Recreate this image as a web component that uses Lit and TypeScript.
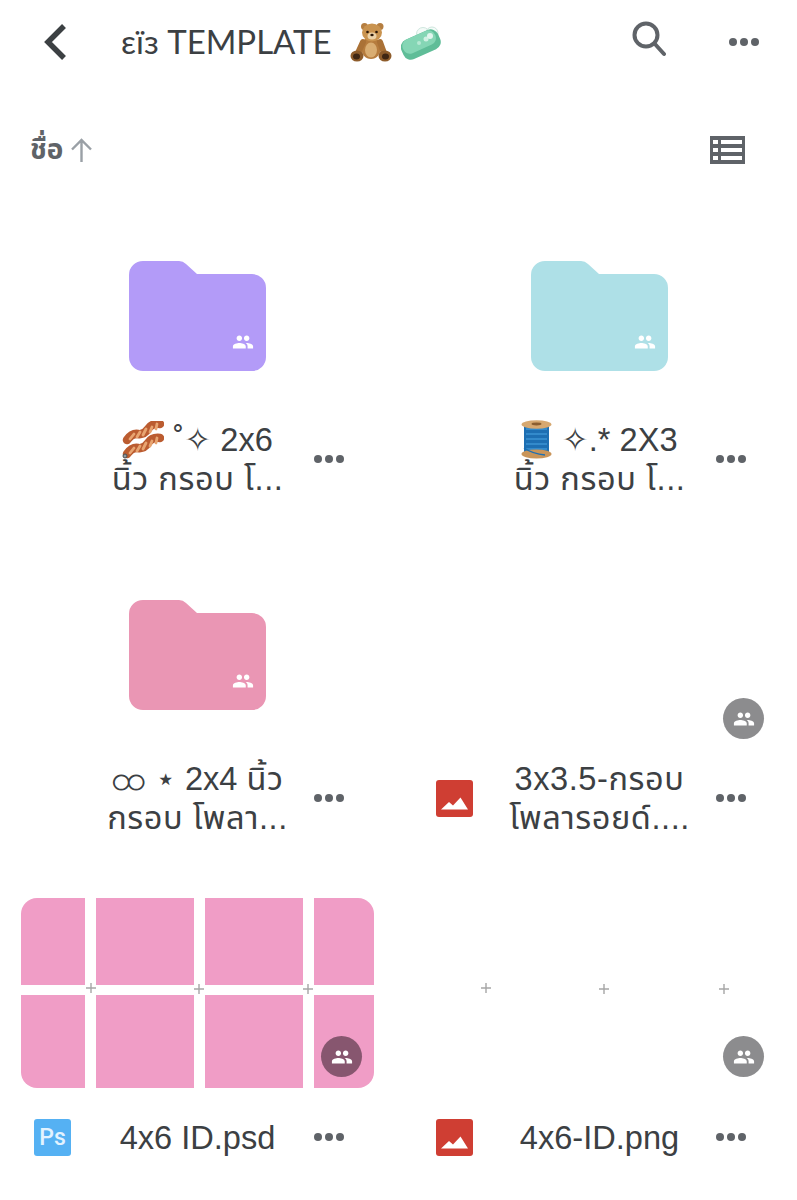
import { LitElement, html, css, svg } from "lit";
import { customElement } from "lit/decorators.js";

const PEOPLE = "M16 11c1.66 0 2.99-1.34 2.99-3S17.66 5 16 5c-1.66 0-3 1.34-3 3s1.34 3 3 3zm-8 0c1.66 0 2.99-1.34 2.99-3S9.66 5 8 5C6.34 5 5 6.34 5 8s1.34 3 3 3zm0 2c-2.33 0-7 1.17-7 3.5V19h14v-2.5c0-2.33-4.67-3.5-7-3.5zm8 0c-.29 0-.62.02-.97.05 1.16.84 1.97 1.97 1.97 3.45V19h6v-2.5c0-2.33-4.67-3.5-7-3.5z";

const dots = (cls = "dots") => html`<svg class=${cls} width="30" height="8" viewBox="0 0 30 8"><circle cx="4" cy="4" r="4"/><circle cx="15" cy="4" r="4"/><circle cx="26" cy="4" r="4"/></svg>`;

const people = (cls: string) => html`<svg class=${cls} viewBox="0 0 24 24"><path d=${PEOPLE}/></svg>`;

const badge = (dark = false) => html`<div class="badge ${dark ? "dark" : ""}">${people("badge-icon")}</div>`;

const folder = (color: string) => html`
  <div class="folder">
    <svg width="137" height="110" viewBox="0 0 137 110">
      <path fill=${color} d="M14 0H50Q54 0 57 3L68 13H123A14 14 0 0 1 137 27V96A14 14 0 0 1 123 110H14A14 14 0 0 1 0 96V14A14 14 0 0 1 14 0Z"/>
    </svg>
    ${people("folder-people")}
  </div>`;

const imageIcon = () => html`<svg class="ficon" width="37" height="37" viewBox="0 0 37 37">
  <rect width="37" height="37" rx="3" fill="#cf3e33"/>
  <path fill="#fff" d="M5 29.5L13 22L17 25.5L24.5 17.5L32 29.5Z"/>
</svg>`;

const psIcon = () => html`<div class="ps">Ps</div>`;

const bear = () => html`<svg class="emoji" width="42" height="39" viewBox="0 0 42 39">
  <ellipse cx="21" cy="25" rx="10" ry="11" fill="#b67c3e"/>
  <ellipse cx="21" cy="27" rx="6" ry="7.5" fill="#d9ad72"/>
  <path d="M13 19L8 30" stroke="#aa7136" stroke-width="6" stroke-linecap="round"/>
  <path d="M30 19L34 30" stroke="#aa7136" stroke-width="6" stroke-linecap="round"/>
  <ellipse cx="7" cy="33" rx="6.5" ry="5.5" fill="#8e5c2b"/>
  <ellipse cx="35" cy="33" rx="6.5" ry="5.5" fill="#8e5c2b"/>
  <ellipse cx="6.5" cy="33.5" rx="3.5" ry="3" fill="#3f2613"/>
  <ellipse cx="35.5" cy="33.5" rx="3.5" ry="3" fill="#3f2613"/>
  <circle cx="14.5" cy="3.5" r="3.5" fill="#b57e40"/>
  <circle cx="30" cy="3.5" r="3.5" fill="#b57e40"/>
  <ellipse cx="22" cy="9.5" rx="10" ry="9" fill="#c9934f"/>
  <ellipse cx="22" cy="13" rx="4.5" ry="3.6" fill="#ecd2a8"/>
  <circle cx="17.5" cy="9" r="1.3" fill="#2a1708"/>
  <circle cx="26.5" cy="9" r="1.3" fill="#2a1708"/>
  <ellipse cx="22" cy="12" rx="1.7" ry="1.2" fill="#2a1708"/>
</svg>`;

const soap = () => html`<svg class="emoji" width="42" height="35" viewBox="0 0 42 35">
  <circle cx="22" cy="9" r="6.5" fill="#f4fbf8" stroke="#cfe6de"/>
  <circle cx="31" cy="8" r="6" fill="#f4fbf8" stroke="#cfe6de"/>
  <g transform="rotate(-24 20 20)">
    <rect x="0" y="9" width="40" height="21" rx="8" fill="#5fbd98"/>
    <rect x="2" y="9" width="35" height="15" rx="7" fill="#85d6b5"/>
  </g>
  <circle cx="25" cy="14" r="2.5" fill="#d0f0e3"/>
  <circle cx="29" cy="11" r="3" fill="#e2f6ee"/>
  <circle cx="18" cy="18" r="2" fill="#b6e8d3"/>
</svg>`;

const bacon = () => html`<svg class="emoji bacon" width="42" height="38" viewBox="0 0 42 38">
  ${[0, 14].map((dy) => svg`<g transform="translate(0 ${dy})" fill="none" stroke-linecap="round">
    <path d="M5 19Q10 12 16 13T26 8T38 3" stroke="#bb5c30" stroke-width="8.5"/>
    <path d="M8 18L12 13M15 16L18 11M21 14L24 8M28 11L30 6M34 8L35 3" stroke="#e8a571" stroke-width="2.8"/>
  </g>`)}
  <circle cx="3" cy="35" r="2" fill="#8f9aa0" stroke="#4a4f52"/>
</svg>`;

const spool = () => html`<svg class="emoji spool" width="31" height="39" viewBox="0 0 31 39">
  <rect x="3" y="5" width="25" height="29" fill="#1d6fb3"/>
  <path d="M5 9H26M5 14H26M5 19H26M5 24H26M5 29H26" stroke="#3b94d3" stroke-width="1.4"/>
  <ellipse cx="15.5" cy="4.5" rx="15" ry="4.2" fill="#d6a870"/>
  <ellipse cx="15.5" cy="4" rx="5" ry="1.4" fill="#8b5e30"/>
  <ellipse cx="15.5" cy="34" rx="15" ry="4.6" fill="#c9955a"/>
  <path d="M3 28Q12 34 24 35" stroke="#1d6fb3" stroke-width="1.5" fill="none"/>
</svg>`;

const plus = (x: number, y: number) => svg`<path d="M${x - 5} ${y}H${x + 5}M${x} ${y - 5}V${y + 5}" stroke="#a6a6a6" stroke-width="1.4"/>`;

@customElement("app-root")
export class AppRoot extends LitElement {
  static styles = css`
    :host {
      display: block;
      width: 797px;
      height: 1200px;
      overflow: hidden;
      background: #fff;
      font-family: "Liberation Sans", "Noto Sans Thai", "Noto Sans", "DejaVu Sans", sans-serif;
      color: #3c4043;
    }
    .header {
      display: flex;
      align-items: center;
      height: 84px;
      padding: 0 38px 0 43px;
    }
    .title {
      margin-left: 54px;
      margin-top: -3px;
      font-family: Lato, "Noto Sans", sans-serif;
      font-size: 33px;
      line-height: 40px;
      color: #3c4043;
      white-space: nowrap;
      display: flex;
      align-items: center;
    }
    .title .emoji { margin-left: 18px; margin-top: 3px; }
    .title .emoji + .emoji { margin-left: 9px; }
    .search { margin-left: auto; margin-top: -6px; margin-right: 3px; }
    .header .dots { margin-left: 60px; }
    .sort {
      display: flex;
      align-items: center;
      height: 132px;
      padding: 0 52px 0 30px;
    }
    .sort-label {
      font-size: 28px;
      line-height: 36px;
      font-weight: 700;
      color: #5f6368;
    }
    .sort-arrow { margin-left: 7px; }
    .list-icon { margin-left: auto; }
    .grid {
      display: grid;
      grid-template-columns: 353px 353px;
      grid-auto-rows: 339px;
      column-gap: 49px;
      padding: 5px 21px 0;
    }
    .card { display: flex; flex-direction: column; }
    .thumb {
      position: relative;
      height: 190px;
      flex: none;
      display: flex;
      align-items: center;
      justify-content: center;
    }
    .thumb.up { margin-top: -1px; margin-bottom: 1px; }
    .folder { position: relative; width: 137px; height: 110px; }
    .folder svg:first-child { display: block; }
    .folder-people {
      position: absolute;
      right: 12px;
      bottom: 18px;
      width: 22px;
      height: 22px;
      fill: #fff;
    }
    .badge {
      position: absolute;
      right: 12px;
      bottom: 11px;
      width: 41px;
      height: 41px;
      border-radius: 50%;
      background: #8c8c8e;
      display: flex;
      align-items: center;
      justify-content: center;
    }
    .badge.dark { background: #87566f; }
    .badge-icon { width: 22px; height: 22px; fill: #fff; }
    .cells {
      width: 100%;
      height: 100%;
      display: grid;
      grid-template-columns: 64px 98px 98px 60px;
      grid-template-rows: 87px 93px;
      gap: 10px 11px;
      border-radius: 16px;
      overflow: hidden;
    }
    .cells div { background: #f09dc6; }
    .crosses { position: absolute; inset: 0; width: 100%; height: 100%; }
    .label {
      height: 96px;
      display: grid;
      grid-template-columns: 1fr 226px 1fr;
      align-items: center;
      padding: 0 13px;
    }
    .ficon, .ps { justify-self: start; }
    .ps {
      grid-column: 1;
      width: 37px;
      height: 37px;
      border-radius: 3px;
      background: #55b1f3;
      color: #e3f3ff;
      font-family: Roboto, sans-serif;
      font-size: 23px;
      line-height: 37px;
      text-align: center;
      font-weight: 500;
    }
    .name {
      grid-column: 2;
      font-size: 32.6px;
      line-height: 39px;
      text-align: center;
      white-space: nowrap;
      color: #3c4043;
      margin: 0 -20px;
    }
    .name .emoji { vertical-align: -4px; margin: -14px 0 -4px; }
    .th { letter-spacing: 0.55px; }
    .loop { font-size: 36px; line-height: 0; }
    .dots { fill: #5f6368; display: block; flex: none; }
    .label .dots { grid-column: 3; justify-self: end; margin-right: 17px; }
  `;

  private label(icon: unknown, name: unknown) {
    return html`<div class="label">${icon ?? html`<span></span>`}<div class="name">${name}</div>${dots()}</div>`;
  }

  render() {
    return html`
      <header class="header">
        <svg width="24" height="38" viewBox="0 0 24 38"><path d="M21 3L5 19L21 35" fill="none" stroke="#3c4043" stroke-width="5.5"/></svg>
        <div class="title">εïз TEMPLATE ${bear()}${soap()}</div>
        <svg class="search" width="34" height="36" viewBox="0 0 34 36" fill="none" stroke="#5f6368" stroke-width="4">
          <circle cx="14" cy="14" r="11.5"/><path d="M22.5 22.5L32 33" stroke-linecap="round"/>
        </svg>
        ${dots()}
      </header>
      <div class="sort">
        <span class="sort-label">ชื่อ</span>
        <svg class="sort-arrow" width="23" height="24" viewBox="0 0 23 24" fill="none" stroke="#9aa0a6" stroke-width="2.4"><path d="M11.5 24V2M2 11.5L11.5 2L21 11.5"/></svg>
        <svg class="list-icon" width="35" height="28" viewBox="0 0 35 28">
          <rect width="35" height="28" fill="#5f6368"/>
          <path fill="#fff" d="M3 4h5v4H3zM11 4h21v4H11zM3 12h5v4H3zM11 12h21v4H11zM3 20h5v4H3zM11 20h21v4H11z"/>
        </svg>
      </div>
      <main class="grid">
        <section class="card">
          <div class="thumb">${folder("#b39bf8")}</div>
          ${this.label(null, html`${bacon()} ˚✧ 2x6<br /><span class="th">นิ้ว กรอบ โ...</span>`)}
        </section>
        <section class="card">
          <div class="thumb">${folder("#aee0e7")}</div>
          ${this.label(null, html`${spool()} ✧.* 2X3<br /><span class="th">นิ้ว กรอบ โ...</span>`)}
        </section>
        <section class="card">
          <div class="thumb">${folder("#ea96b4")}</div>
          ${this.label(null, html`<span class="loop">ထ</span> ⋆ 2x4 <span class="th">นิ้ว</span><br /><span class="th">กรอบ โพลา...</span>`)}
        </section>
        <section class="card">
          <div class="thumb">${badge()}</div>
          ${this.label(imageIcon(), html`<span class="th">3x3.5-กรอบ</span><br /><span class="th">โพลารอยด์....</span>`)}
        </section>
        <section class="card">
          <div class="thumb up">
            <div class="cells">
              <div></div><div></div><div></div><div></div>
              <div></div><div></div><div></div><div></div>
            </div>
            <svg class="crosses" viewBox="0 0 353 190">${plus(70, 90)}${plus(178, 91)}${plus(287, 91)}</svg>
            ${badge(true)}
          </div>
          ${this.label(psIcon(), "4x6 ID.psd")}
        </section>
        <section class="card">
          <div class="thumb up">
            <svg class="crosses" viewBox="0 0 353 190">${plus(63, 90)}${plus(181, 91)}${plus(301, 91)}</svg>
            ${badge()}
          </div>
          ${this.label(imageIcon(), "4x6-ID.png")}
        </section>
      </main>
    `;
  }
}
